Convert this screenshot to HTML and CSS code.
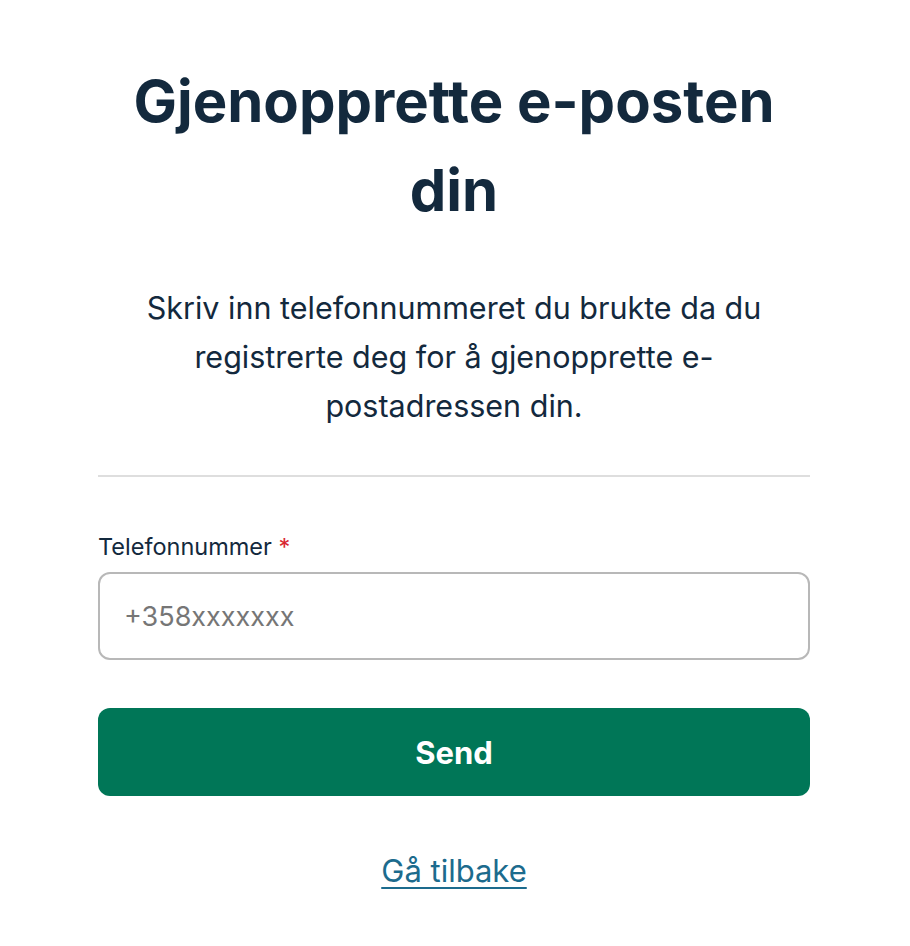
FILE: index.html
```html
<!DOCTYPE html>
<html lang="no">
<head>
<meta charset="utf-8">
<title>Gjenopprette e-posten din</title>
<link rel="stylesheet" href="styles.css">
</head>
<body>
<main class="page">
  <h1 class="title">Gjenopprette e-posten din</h1>
  <p class="intro">Skriv inn telefonnummeret du brukte da du registrerte deg for å gjenopprette e-postadressen din.</p>
  <hr class="divider">
  <form class="form">
    <label class="label" for="phone">Telefonnummer <span class="req">*</span></label>
    <input class="input" id="phone" type="tel" placeholder="+358xxxxxxx">
    <button class="btn" type="button">Send</button>
  </form>
  <div class="back"><a class="back-link" href="#">Gå tilbake</a></div>
</main>
</body>
</html>
```
FILE: styles.css
```css
* { box-sizing: border-box; }
html, body { margin: 0; padding: 0; background: #fff; }
body {
  font-family: Inter, "Noto Sans", "Liberation Sans", sans-serif;
  color: #13293d;
}
.page {
  width: 712px;
  margin: 0 auto;
  padding-top: 57px;
  transform: translateX(-1px);
}
.title {
  margin: 0;
  font-size: 58px;
  line-height: 89px;
  font-weight: 700;
  text-align: center;
  color: #13293d;
}
.intro {
  margin: 48px 0 0;
  font-size: 30.5px;
  line-height: 49px;
  text-align: center;
  padding: 0 40px;
  color: #13293d;
}
.divider {
  margin: 45px 0 0;
  border: 0;
  border-top: 2px solid #dedede;
  height: 0;
}
.form {
  margin-top: 55px;
  display: flex;
  flex-direction: column;
}
.label {
  font-size: 23.5px;
  line-height: 29px;
  color: #13293d;
}
.req { color: #d9252f; }
.input {
  margin-top: 11px;
  height: 88px;
  border: 2px solid #b8b8b8;
  border-radius: 12px;
  padding: 0 24px;
  font-family: inherit;
  font-size: 27px;
  color: #13293d;
  outline: none;
}
.input::placeholder { color: #767676; }
.btn {
  margin-top: 48px;
  height: 88px;
  border: 0;
  border-radius: 12px;
  background: #007657;
  color: #fff;
  font-family: inherit;
  font-size: 31px;
  font-weight: 700;
}
.back {
  margin-top: 56px;
  text-align: center;
}
.back-link {
  font-size: 31px;
  line-height: 38px;
  color: #1c6b8d;
  text-decoration: underline;
  text-underline-offset: 5px;
  text-decoration-thickness: 2px;
}
```
